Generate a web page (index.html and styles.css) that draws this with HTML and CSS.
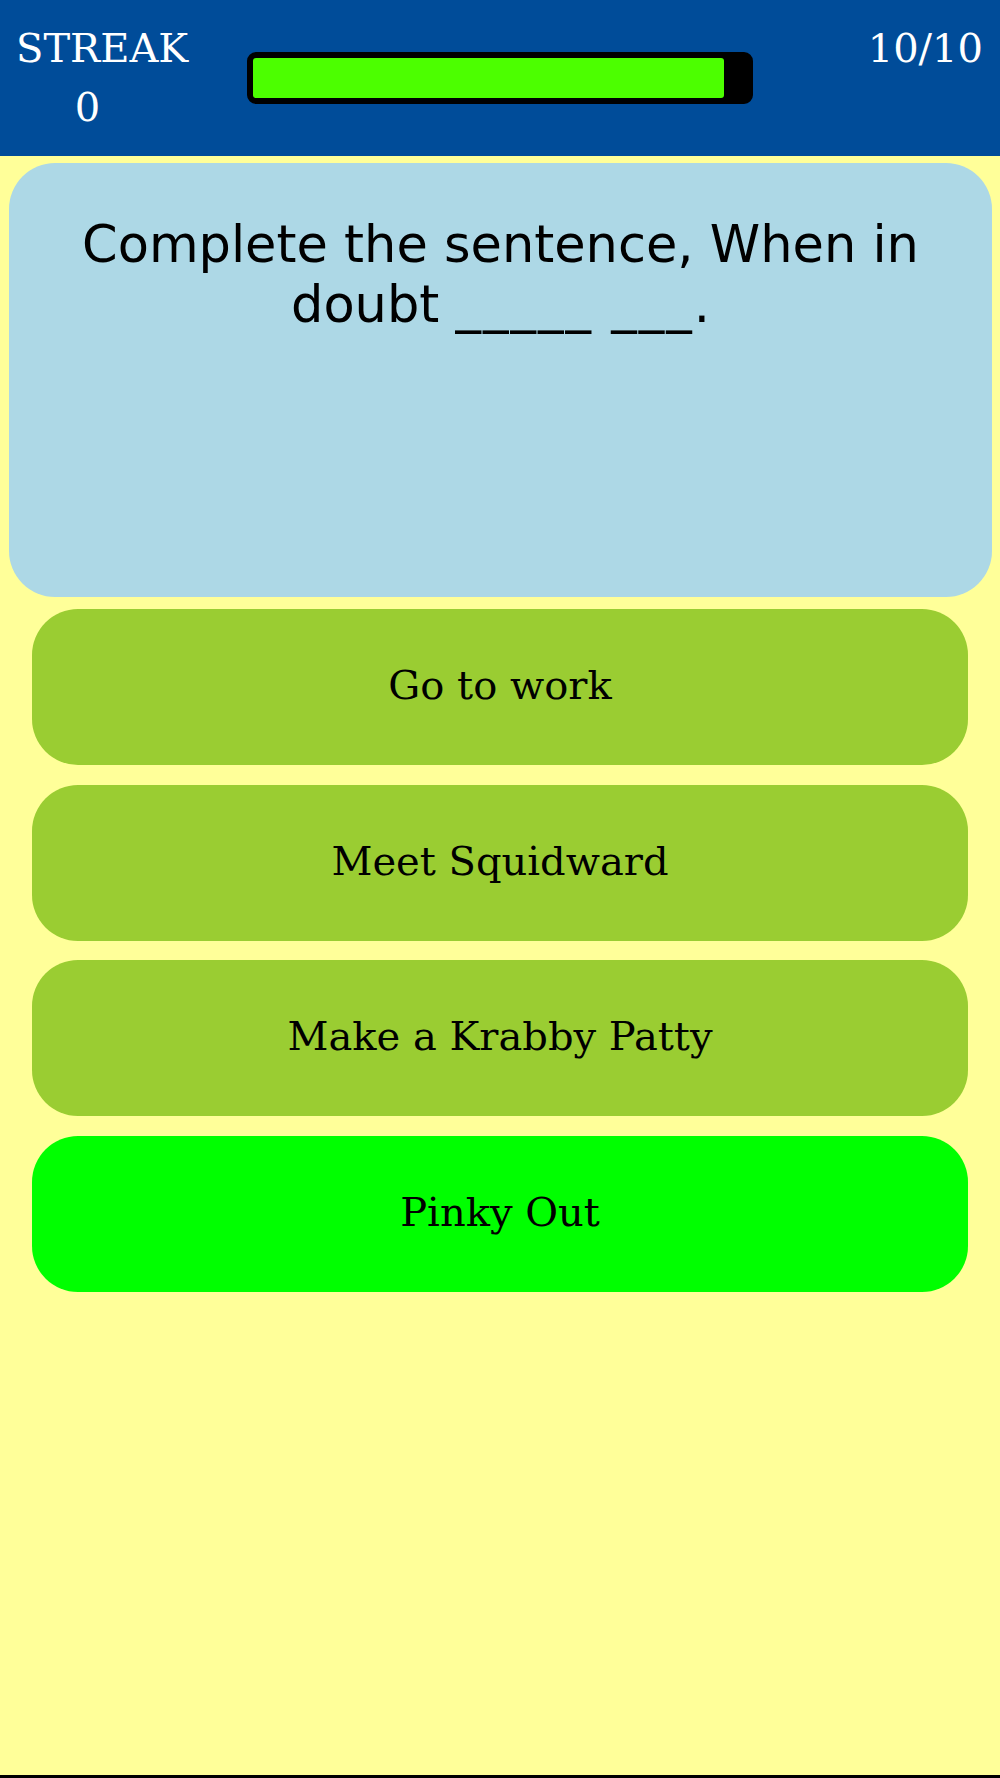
FILE: index.html
```html
<!DOCTYPE html>
<html>
<head>
<meta charset="utf-8">
<link rel="stylesheet" href="styles.css">
</head>
<body>
<div class="page">
  <header class="topbar">
    <div class="streak">
      <div class="streak-label">STREAK</div>
      <div class="streak-value">0</div>
    </div>
    <div class="progress">
      <div class="progress-fill" style="width: 95.5%"></div>
    </div>
    <div class="count">10/10</div>
  </header>
  <section class="question">
    <p class="question-text">Complete the sentence, When in doubt <span class="blank">_____ ___</span>.</p>
  </section>
  <div class="answers">
    <div class="answer">Go to work</div>
    <div class="answer">Meet Squidward</div>
    <div class="answer">Make a Krabby Patty</div>
    <div class="answer correct">Pinky Out</div>
  </div>
</div>
</body>
</html>
```
FILE: styles.css
```css
html, body {
  margin: 0;
  padding: 0;
}
body {
  background: #000;
}
.page {
  background: #ffff99;
  min-height: 1775px;
  display: flex;
  flex-direction: column;
}
.topbar {
  background: #004c99;
  height: 156px;
  box-sizing: border-box;
  padding: 19px 17px 0 16px;
  display: grid;
  grid-template-columns: 1fr 506px 1fr;
  align-items: start;
  color: #fff;
  font-family: "DejaVu Serif", serif;
  font-size: 40px;
  line-height: 59px;
}
.streak {
  width: 143px;
  text-align: center;
  white-space: nowrap;
}
.progress {
  margin-top: 33px;
  height: 52px;
  box-sizing: border-box;
  border: 6px solid #000;
  border-radius: 9px;
  background: #000;
}
.progress-fill {
  height: 100%;
  background: #4cff00;
  border-radius: 3px;
}
.count {
  justify-self: end;
}
.question {
  margin: 7px 8px 0 9px;
  height: 434px;
  box-sizing: border-box;
  background: #add8e6;
  border-radius: 46px;
  padding: 52px 30px 0;
}
.question-text {
  margin: 0;
  text-align: center;
  font-family: "DejaVu Sans", sans-serif;
  font-size: 51px;
  line-height: 59.5px;
  color: #000;
}
.blank {
  letter-spacing: 2px;
}
.answers {
  margin: 12px 32px 0 32px;
  display: flex;
  flex-direction: column;
  gap: 19.5px;
}
.answer {
  height: 156px;
  box-sizing: border-box;
  padding-bottom: 4px;
  border-radius: 46px;
  background: #9acd32;
  display: flex;
  align-items: center;
  justify-content: center;
  font-family: "DejaVu Serif", serif;
  font-size: 40px;
  color: #000;
}
.answer.correct {
  background: #00ff00;
}
```
